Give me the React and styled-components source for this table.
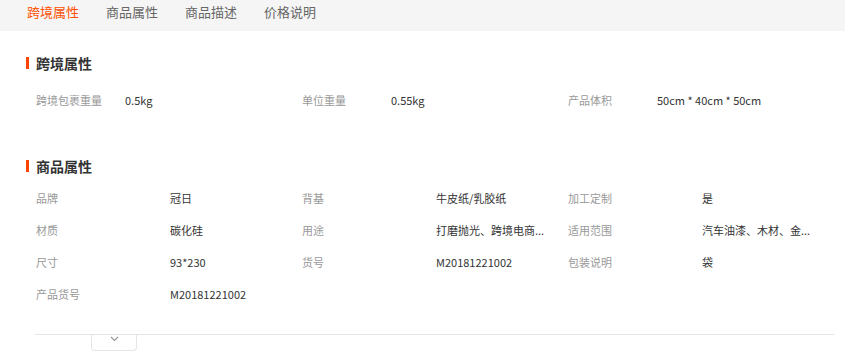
import React from "react";
import styled, { createGlobalStyle } from "styled-components";

const GlobalStyle = createGlobalStyle`
  body {
    margin: 0;
    background: #fff;
    font-family: "Microsoft YaHei", "Noto Sans CJK SC", "Noto Sans", sans-serif;
  }
`;

const tabs = ["跨境属性", "商品属性", "商品描述", "价格说明"];

const crossBorder = [
  ["跨境包裹重量", "0.5kg"],
  ["单位重量", "0.55kg"],
  ["产品体积", "50cm * 40cm * 50cm"],
];

// long values are shown cut, as the page lists them
const productAttrs = [
  ["品牌", "冠日"],
  ["背基", "牛皮纸/乳胶纸"],
  ["加工定制", "是"],
  ["材质", "碳化硅"],
  ["用途", "打磨抛光、跨境电商..."],
  ["适用范围", "汽车油漆、木材、金..."],
  ["尺寸", "93*230"],
  ["货号", "M20181221002"],
  ["包装说明", "袋"],
  ["产品货号", "M20181221002"],
];

const App = () => {
  return (
    <>
      <GlobalStyle />
      <TabBar>
        {tabs.map((t, i) => (
          <Tab key={t} active={i === 0}>
            {t}
          </Tab>
        ))}
      </TabBar>
      <Content>
        <Section first>
          <Title>跨境属性</Title>
          <Grid rowHeight={42}>
            {crossBorder.map(([k, v]) => (
              <Cell key={k} labelWidth={89}>
                <Label>{k}</Label>
                <Value>{v}</Value>
              </Cell>
            ))}
          </Grid>
        </Section>
        <Section>
          <Title>商品属性</Title>
          <Grid rowHeight={32}>
            {productAttrs.map(([k, v]) => (
              <Cell key={k} labelWidth={134}>
                <Label>{k}</Label>
                <Value>{v}</Value>
              </Cell>
            ))}
          </Grid>
        </Section>
        <Footer>
          <Toggle>
            <svg width="9" height="6" viewBox="0 0 9 6">
              <path d="M1 1 L4.5 4.5 L8 1" fill="none" stroke="#999" strokeWidth="1.2" />
            </svg>
          </Toggle>
        </Footer>
      </Content>
    </>
  );
};

const TabBar = styled.div`
  display: flex;
  align-items: center;
  height: 31px;
  padding-left: 27px;
  gap: 27px;
  background: #f5f5f5;
`;

const Tab = styled.a`
  font-size: 13px;
  line-height: 24px;
  margin-top: -8px;
  color: ${(p) => (p.active ? "#ff5000" : "#666")};
  cursor: pointer;
`;

const Content = styled.div`
  padding: 0 11px 0 26px;
`;

const Section = styled.div`
  margin-top: ${(p) => (p.first ? "25px" : "38px")};
`;

const Title = styled.h3`
  position: relative;
  margin: 0 0 9px;
  padding-left: 10px;
  font-size: 14px;
  line-height: 14px;
  font-weight: 700;
  color: #333;
  &::before {
    content: "";
    position: absolute;
    left: 0;
    top: 1px;
    width: 3px;
    height: 12px;
    background: #ff4400;
  }
`;

const Grid = styled.div`
  display: grid;
  grid-template-columns: repeat(3, 266px);
  grid-auto-rows: ${(p) => p.rowHeight}px;
  margin-left: 10px;
`;

const Cell = styled.div`
  display: grid;
  grid-template-columns: ${(p) => p.labelWidth}px 1fr;
  align-items: center;
  font-size: 11px;
`;

const Label = styled.span`
  color: #999;
`;

const Value = styled.span`
  color: #333;
  white-space: nowrap;
  overflow: hidden;
  text-overflow: ellipsis;
`;

const Footer = styled.div`
  margin: 24px 0 0 9px;
  border-top: 1px solid #e5e5e5;
  padding-left: 56px;
`;

const Toggle = styled.div`
  display: flex;
  justify-content: center;
  width: 46px;
  height: 16px;
  padding-top: 1px;
  box-sizing: border-box;
  border: 1px solid #e5e5e5;
  border-top: none;
  border-radius: 0 0 4px 4px;
`;

export default App;
